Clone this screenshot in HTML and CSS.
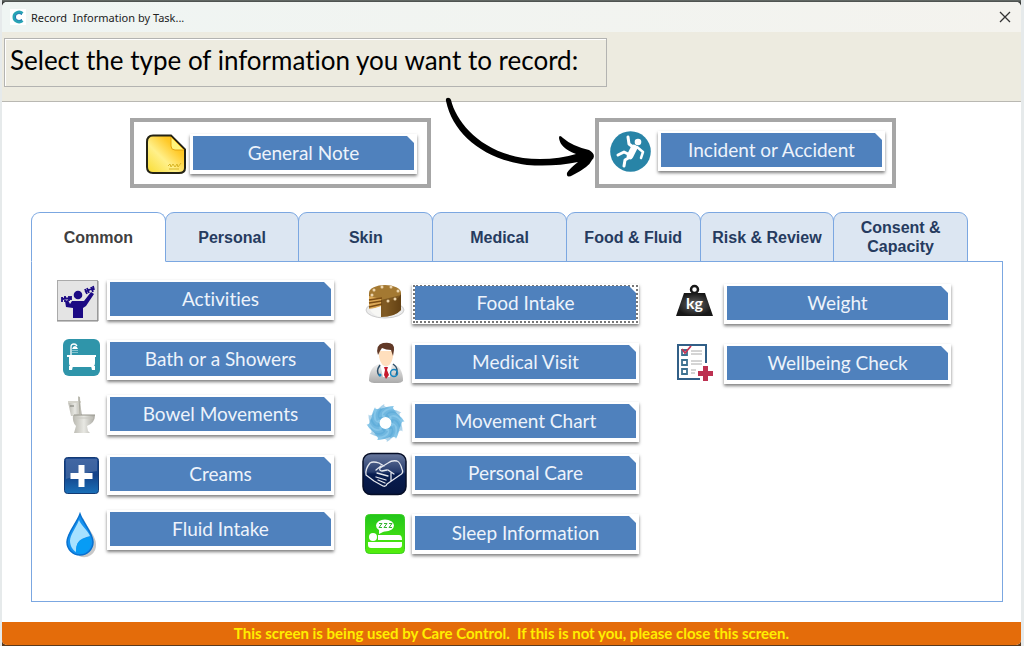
FILE: index.html
```html
<!DOCTYPE html>
<html lang="en">
<head>
  <meta charset="UTF-8" />
  <meta name="viewport" content="width=device-width, initial-scale=1.0" />
  <title>Record Information by Task</title>
  <link rel="stylesheet" href="styles.css">
</head>
<body>
  <div class="frame">
    <div class="window">
      <header class="titlebar">
        <svg class="logo" viewBox="0 0 16 16"><rect width="16" height="16" fill="#fff"/><path d="M12.500 4.500C9 1.500 4 4 4 8s5 6.500 8.500 3.500" fill="none" stroke="#27a3b4" stroke-width="3"/><path d="M12 5.500C9 3.500 5.500 5 5.500 8s3.500 4.500 6.500 2.500" fill="none" stroke="#2373b5" stroke-width="1"/></svg>
        <span class="titlebar-text">Record&nbsp; Information by Task...</span>
        <button class="close" type="button" aria-label="Close">
          <svg viewBox="0 0 12 12"><path d="M1 1l10 10M11 1L1 11" stroke="#333" stroke-width="1.300"/></svg>
        </button>
      </header>

      <div class="heading">
        <h1>Select the type of information you want to record:</h1>
      </div>

      <main>
        <!-- Shortcuts -->
        <section class="shortcuts">
          <div class="shortcut note">
            <svg class="shortcut-icon" viewBox="0 0 41 41">
              <defs>
                <linearGradient id="paper" x1="1" y1="0" x2="0" y2="1"><stop offset="0" stop-color="#ffbd14"/><stop offset=".3" stop-color="#ffc928"/><stop offset=".6" stop-color="#fff08a"/><stop offset="1" stop-color="#f9dc30"/></linearGradient>
              </defs>
              <path d="M7 1.500h18l14 14V34q0 5-6 5H7q-6 0-6-6V8q0-6.500 6-6.500z" fill="url(#paper)" stroke="#242314" stroke-width="2"/>
              <path d="M25 3v9q0 4 4 4h9z" fill="#fff47c" stroke="#e4a510"/>
              <path d="M22 32l2-2 1 3 2-3 2 3 2-3 1 3 3-4M23 35h10" fill="none" stroke="#d9b625"/>
            </svg>
            <button class="task-btn" type="button"><span>General Note</span></button>
          </div>
          <div class="shortcut incident">
            <svg class="arrow" viewBox="0 0 150 84"><path d="M1 5C0 1 5 1 6 4C12 29 42 63 95 63Q115 63 131 58Q115 52 114 42Q114 38 118 42Q127 50 144 54Q152 59 147 64Q144 71 128 79Q121 83 122 77Q124 73 133 66Q109 71 82 69C38 63 8 38 1 5z"/></svg>
            <svg class="shortcut-icon" viewBox="0 0 41 41">
              <circle cx="20.500" cy="20.500" r="20.300" fill="#2884a7"/>
              <circle cx="28" cy="11" r="3.300" fill="#fff"/>
              <g fill="none" stroke="#fff" stroke-linecap="round" stroke-linejoin="round">
                <path d="M18 6l1 7 4 3" stroke-width="3"/>
                <path d="M24 17l-4 8" stroke-width="6.500"/>
                <path d="M27 16l6 5-2 6" stroke-width="2.500"/>
                <path d="M18 23l-4-2-6 3M20 26l-5 3-1 6" stroke-width="3"/>
              </g>
            </svg>
            <button class="task-btn" type="button"><span>Incident or Accident</span></button>
          </div>
        </section>

        <!-- Category tabs -->
        <div class="tabs" role="tablist">
          <button class="tab active" type="button" role="tab" aria-selected="true">Common</button>
          <button class="tab" type="button" role="tab">Personal</button>
          <button class="tab" type="button" role="tab">Skin</button>
          <button class="tab" type="button" role="tab">Medical</button>
          <button class="tab" type="button" role="tab">Food &amp; Fluid</button>
          <button class="tab" type="button" role="tab">Risk &amp; Review</button>
          <button class="tab" type="button" role="tab">Consent &amp; Capacity</button>
        </div>

        <section class="panel" role="tabpanel">
          <div class="column first">
            <div class="task">
              <svg class="icon" viewBox="0 0 46 46">
                <rect x=".500" y="3.500" width="40" height="40" fill="#e4e4e4" stroke="#aaa"/><path d="M0 44h41V4" fill="none" stroke="#888"/>
                <circle cx="21" cy="18" r="4.300" fill="#1c0a84"/>
                <path d="M15 24h12l7-9 3 2-8 12-3 2v10H16V31l-7-1-1-6 3-1 2 4z" fill="#1c0a84"/>
                <path d="M5 22l9-1M5 20v5M8 19v6M12 19v5M14 19v4M28 15l8-4M28 12l2 5M30 11l2 5M34 10l2 5M36 9l1 4" stroke="#1c0a84" stroke-width="1.800"/>
              </svg>
              <button class="task-btn" type="button"><span>Activities</span></button>
            </div>
            <div class="task">
              <svg class="icon" viewBox="0 0 46 46">
                <rect x="6" y="2" width="37" height="37" rx="6" fill="#2f95aa"/>
                <path d="M14 18V10q0-3 3-3 2 0 3 2" fill="none" stroke="#fff" stroke-width="1.300"/>
                <path d="M15 12q1-3 3-3t3 3z" fill="#fff"/><path d="M16 13v4M18 13v4M20 13v3" stroke="#d8eff3" stroke-dasharray="1 1"/>
                <path d="M10 18h29v2H10zM12 20h26v6q0 4-4 4H16q-4 0-4-4zM12 29h4l-1 4h-3zM34 29h4v4h-3z" fill="#fff"/>
              </svg>
              <button class="task-btn" type="button"><span>Bath or a Showers</span></button>
            </div>
            <div class="task">
              <svg class="icon" viewBox="0 0 46 46">
                <defs><linearGradient id="china"><stop offset="0" stop-color="#b9b8b0"/><stop offset=".5" stop-color="#e8e8e3"/><stop offset="1" stop-color="#aaa9a2"/></linearGradient></defs>
                <path d="M11 10h12l2 14H14z" fill="url(#china)"/><path d="M11 9h13v2H11z" fill="#d4d3cb"/><path d="M13 14h4" stroke="#77766f"/>
                <path d="M21 4l2 1 1 18h-3z" fill="#cfcec5"/><path d="M22 5l1 17" stroke="#97968d" stroke-width=".700"/>
                <path d="M16 23h22q0 8-8 11l1 5 2 2H17l2-7q-4-4-3-11z" fill="url(#china)"/><path d="M17 23h21" stroke="#96958c"/><path d="M18 26h18" stroke="#c8c7c0"/>
              </svg>
              <button class="task-btn" type="button"><span>Bowel Movements</span></button>
            </div>
            <div class="task">
              <svg class="icon" viewBox="0 0 46 46">
                <defs><linearGradient id="cream" x2="0" y2="1"><stop offset="0" stop-color="#1f4b93"/><stop offset=".5" stop-color="#14438a"/><stop offset="1" stop-color="#1a70b8"/></linearGradient></defs>
                <rect x="7.500" y="5.500" width="34" height="36" rx="3" fill="url(#cream)" stroke="#133a73"/>
                <path d="M9 7h31v12q-14 2-31 8z" fill="#fff" opacity=".16"/>
                <path d="M21.500 13h6v8h8v6h-8v8h-6v-8h-8v-6h8z" fill="#fff"/>
              </svg>
              <button class="task-btn" type="button"><span>Creams</span></button>
            </div>
            <div class="task">
              <svg class="icon" viewBox="0 0 46 46">
                <path d="M26 11c6 12 13 19 13 26a12 12 0 0 1-17 12z" fill="#c8c8c8"/>
                <path d="M23 7c3 9 13 19 13 28a13 13 0 0 1-26 0c0-9 10-19 13-28z" fill="#1592f0" stroke="#0871cf" stroke-width="1.500"/>
                <path d="M22 13c-3 8-9 15-9 21 0 5 3 9 6 11 0-9 2-13 14-16-2-5-9-11-11-16z" fill="#a7e1ff"/>
                <path d="M19 45c0-9 3-13 14-15 3 8-1 16-9 17z" fill="#079cf5"/>
              </svg>
              <button class="task-btn" type="button"><span>Fluid Intake</span></button>
            </div>
          </div>

          <div class="column second">
            <div class="task">
              <svg class="icon" viewBox="0 0 46 46">
                <defs><linearGradient id="cake"><stop offset="0" stop-color="#8f6525"/><stop offset=".5" stop-color="#a97e38"/><stop offset="1" stop-color="#5f3f12"/></linearGradient></defs>
                <ellipse cx="23" cy="29" rx="19" ry="8" fill="#ececec" stroke="#ccc"/>
                <path d="M7 12v15l12-2v11q14 0 20-7V12z" fill="url(#cake)"/>
                <ellipse cx="23" cy="12" rx="16" ry="8" fill="#a47932"/>
                <path d="M7 15l12 3v8L7 28z" fill="#dca957"/><path d="M7 19l13-2M7 22l13-2M7 26l13-3" stroke="#7b4c13" stroke-width="1.300"/>
                <path d="M8 29l11-4v11q-7-1-11-7z" fill="#f7f7f4"/><path d="M19 25V19l20-5v15q-7 7-20 7z" fill="#654316" opacity=".6"/>
                <g fill="#ecd4ac"><circle cx="12" cy="9" r="1.500"/><circle cx="20" cy="6" r="1.500"/><circle cx="29" cy="6" r="1.500"/><circle cx="36" cy="10" r="1.500"/><circle cx="10" cy="14" r="1.500"/><circle cx="26" cy="20" r="1.500"/><circle cx="33" cy="18" r="1.500"/></g>
              </svg>
              <button class="task-btn focused" type="button"><span>Food Intake</span></button>
            </div>
            <div class="task">
              <svg class="icon" viewBox="0 0 46 46">
                <defs><linearGradient id="coat" x2="0" y2="1"><stop offset="0" stop-color="#f0f0f0"/><stop offset="1" stop-color="#aaa"/></linearGradient></defs>
                <path d="M7 41q0-14 10-17h14q10 3 10 17-2 2-5 2H12q-3 0-5-2z" fill="url(#coat)"/>
                <path d="M18 23l6 4 6-4-2 14h-7z" fill="#fff"/><path d="M22 27h4l-1 3 2 5-3 4-2-4 1-5z" fill="#c61b2c"/>
                <path d="M17 11h14v6q-2 9-7 9t-7-9z" fill="#ffdfbd"/><path d="M16 15q-3-10 5-12 12-2 11 7l-1 6-2-6q-5 0-9-2l-2 3z" fill="#613927"/>
                <path d="M18 25q-5 7 0 11M31 24q6 4 3 11" fill="none" stroke="#31516a" stroke-width="1.500"/><circle cx="32" cy="33" r="3.500" fill="none" stroke="#1686c1" stroke-width="1.500"/><circle cx="18" cy="35" r="1.500" fill="#1686c1"/>
              </svg>
              <button class="task-btn" type="button"><span>Medical Visit</span></button>
            </div>
            <div class="task">
              <svg class="icon" viewBox="0 0 46 46">
                <defs><path id="blade" d="M17 18Q18 7 32 7Q29 9 35 13Q25 10 23 18z"/></defs>
                <circle cx="23.500" cy="24" r="10.500" fill="none" stroke="#69b4de" stroke-width="9"/>
                <g fill="#86c6e9"><use href="#blade"/><use href="#blade" transform="rotate(60 23.500 24)"/><use href="#blade" transform="rotate(120 23.500 24)"/><use href="#blade" transform="rotate(180 23.500 24)"/><use href="#blade" transform="rotate(240 23.500 24)"/><use href="#blade" transform="rotate(300 23.500 24)"/></g>
                <g fill="#5ba9d8" opacity=".5"><use href="#blade" transform="rotate(30 23.500 24)"/><use href="#blade" transform="rotate(90 23.500 24)"/><use href="#blade" transform="rotate(150 23.500 24)"/><use href="#blade" transform="rotate(210 23.500 24)"/><use href="#blade" transform="rotate(270 23.500 24)"/><use href="#blade" transform="rotate(330 23.500 24)"/></g>
                <circle cx="23.500" cy="24" r="5" fill="#fff"/>
              </svg>
              <button class="task-btn" type="button"><span>Movement Chart</span></button>
            </div>
            <div class="task">
              <svg class="icon" viewBox="0 0 46 46">
                <defs><linearGradient id="care" x2="0" y2="1"><stop offset="0" stop-color="#69799e"/><stop offset=".45" stop-color="#263b6c"/><stop offset=".5" stop-color="#071c50"/><stop offset="1" stop-color="#061640"/></linearGradient></defs>
                <rect x="1" y="2.500" width="43" height="41" rx="8" fill="url(#care)" stroke="#060e27" stroke-width="1.500"/>
                <path d="M17 12q-6-2-9 0-5 6-4 12l8 6 9 5q3 1 4-2l13-9q4-2 2-6-2-7-5-8-5-1-9 2l-8 5q-1 3 2 3l5-1M17 12l5 3M14 19l5-4M26 19l6 4M15 22l11 3M14 26l10 3M16 29l7 3M29 22v8" fill="none" stroke="#e4e7ee" stroke-width="1.300" stroke-linecap="round" stroke-linejoin="round"/>
              </svg>
              <button class="task-btn" type="button"><span>Personal Care</span></button>
            </div>
            <div class="task">
              <svg class="icon" viewBox="0 0 46 46">
                <defs><linearGradient id="sleep" x2="0" y2="1"><stop offset="0" stop-color="#22c51c"/><stop offset="1" stop-color="#54ee0c"/></linearGradient></defs>
                <rect x="3.500" y="3.500" width="39" height="39" rx="4" fill="url(#sleep)" stroke="#3bce22"/>
                <ellipse cx="23" cy="14.500" rx="9" ry="6" fill="#fff"/><path d="M17 18v5l6-3z" fill="#fff"/>
                <path d="M17 12.500h3l-3 4h3M22 12.500h3l-3 4h3M27 12.500h3l-3 4h3" fill="none" stroke="#35b532"/>
                <circle cx="11" cy="26" r="4" fill="#fff"/><path d="M16 24h21q3 0 3 5H16zM6 31h34v3q0 3-3 3H9q-3 0-3-3z" fill="#fff"/>
              </svg>
              <button class="task-btn" type="button"><span>Sleep Information</span></button>
            </div>
          </div>

          <div class="column third">
            <div class="task">
              <svg class="icon" viewBox="0 0 46 46">
                <defs><radialGradient id="iron"><stop offset="0" stop-color="#666"/><stop offset="1" stop-color="#171717"/></radialGradient></defs>
                <circle cx="20.500" cy="8.500" r="3.500" fill="none" stroke="#181818" stroke-width="2.500"/>
                <path d="M10 12h21l8 23H2z" fill="url(#iron)"/>
                <text class="kg" x="20.500" y="28" text-anchor="middle">kg</text>
              </svg>
              <button class="task-btn" type="button"><span>Weight</span></button>
            </div>
            <div class="task">
              <svg class="icon" viewBox="0 0 46 46">
                <path d="M32 22V4H4v34h22" fill="#fff" stroke="#315f87" stroke-width="2"/>
                <path d="M8 9h5v5H8zM8 19h5v5H8zM8 28h5v5H8z" fill="#fff" stroke="#3d7190" stroke-width="1.800"/>
                <path d="M8 8l3 4 6-7" fill="none" stroke="#c43453" stroke-width="1.800"/>
                <path d="M17 10h11M17 13h11M17 20h11M17 23h11M17 29h5M17 32h4" stroke="#aaa"/>
                <path d="M29 25h5v5h5v5h-5v5h-5v-5h-5v-5h5z" fill="#bd3151"/>
              </svg>
              <button class="task-btn" type="button"><span>Wellbeing Check</span></button>
            </div>
          </div>
        </section>
      </main>

      <footer>This screen is being used by Care Control.&nbsp; If this is not you, please close this screen.</footer>
    </div>
  </div>
</body>
</html>
```
FILE: styles.css
```css
* {
  box-sizing: border-box;
}
body {
  margin: 0;
  background-color: #e6eaeb;
  font-family: Lato, sans-serif;
  font-variant-ligatures: none;
}
button {
  font-family: inherit;
  font-variant-ligatures: none;
  cursor: pointer;
}
.frame {
  margin: 0 3px 0 2px;
  padding: 2px 0 1px;
  min-height: 100vh;
  background: linear-gradient(#69706c, #111 5px, #111 50%, #5c3a1c);
  display: flex;
}
.window {
  flex: 1;
  display: flex;
  flex-direction: column;
  background-color: #fff;
  border-radius: 5px;
  overflow: hidden;
}

/* Title bar */
.titlebar {
  display: flex;
  align-items: center;
  height: 30px;
  padding: 0 10px 0 8px;
  background: linear-gradient(to right, #eff5f3, #f4f3ee);
}
.logo {
  width: 16px;
  height: 16px;
  margin-right: 5px;
}
.titlebar-text {
  flex: 1;
  font-family: "Noto Sans", sans-serif;
  font-size: 11px;
  color: #222;
}
.close {
  display: flex;
  padding: 0;
  border: none;
  background: none;
}
.close svg {
  width: 12px;
  height: 12px;
}
.heading {
  display: flex;
  height: 70px;
  padding: 6px 2px;
  background-color: #edebe0;
  border-bottom: 1px solid #b9b8b2;
}
h1 {
  width: 603px;
  height: 49px;
  margin: 0;
  padding-left: 5px;
  border: 1px solid #b3b3b1;
  box-shadow: inset 1px 1px #fff;
  font-size: 26px;
  font-weight: 400;
  line-height: 43px;
  white-space: nowrap;
  color: #000;
}
main {
  flex: 1;
  display: flex;
  flex-direction: column;
  padding: 16px 18px 20px 29px;
}

/* Shortcuts */
.shortcuts {
  display: flex;
  justify-content: center;
  gap: 164px;
  padding-right: 8px;
  margin-bottom: 24px;
}
.shortcut {
  position: relative;
  display: flex;
  align-items: flex-start;
  width: 301px;
  height: 70px;
  border: 4px solid #a6a6a6;
}
.note {
  gap: 3px;
  padding: 12px 6px 0 12px;
}
.incident {
  gap: 7px;
  padding: 9px 6px 0 11px;
}
.shortcut-icon {
  flex: none;
  width: 41px;
  height: 41px;
}
.arrow {
  position: absolute;
  right: 100%;
  top: -26px;
  width: 150px;
  height: 84px;
  margin-right: 4px;
}

/* Task buttons */
.task-btn {
  width: 227px;
  height: 40px;
  padding: 2px 3px 4px;
  border: none;
  background-color: #fff;
  box-shadow: 0 2px 3px rgba(0,0,0,0.5);
}
.task-btn span {
  display: block;
  height: 34px;
  background-color: #4f81bd;
  clip-path: polygon(0 0, calc(100% - 7px) 0, 100% 7px, 100% 100%, 0 100%);
  font-size: 19px;
  line-height: 33px;
  color: #edf3fb;
}
.task-btn.focused {
  outline: 2px dotted #777;
  outline-offset: -3px;
}

/* Tabs */
.tabs {
  display: flex;
  padding-right: 36px;
}
.tab {
  flex: 0 1 135px;
  height: 50px;
  margin: 0 -1px -1px 0;
  padding: 0 8px;
  border: 1px solid #7ba7e1;
  border-radius: 9px 9px 0 0;
  background-color: #dce6f2;
  font-family: "Liberation Sans", Arial, sans-serif;
  font-size: 16px;
  font-weight: 700;
  line-height: 19px;
  color: #263b5f;
}
.tab.active {
  position: relative;
  background-color: #fff;
  border-bottom-color: #fff;
  color: #404040;
}
.panel {
  flex: 1;
  display: grid;
  grid-template-columns: 305fr 312fr 328fr;
  padding: 18px 0 20px 25px;
  border: 1px solid #7ba7e1;
}
.column {
  display: grid;
  align-content: start;
}
.first {
  grid-template-rows: 60px 55px 60px 55px 40px;
}
.second {
  grid-template-rows: 59px 59px 52px 60px 40px;
  padding-top: 4px;
}
.third {
  grid-template-rows: 60px 40px;
  padding-top: 4px;
}
.task {
  display: flex;
  align-items: center;
  gap: 4px;
  height: 40px;
}
.icon {
  flex: none;
  width: 46px;
  height: 46px;
  overflow: visible;
}
.kg {
  font-size: 16px;
  font-weight: 700;
  fill: #fff;
}
footer {
  height: 23px;
  background-color: #e46c0a;
  font-size: 15px;
  font-weight: 700;
  line-height: 22px;
  text-align: center;
  color: #ffee00;
}
```
